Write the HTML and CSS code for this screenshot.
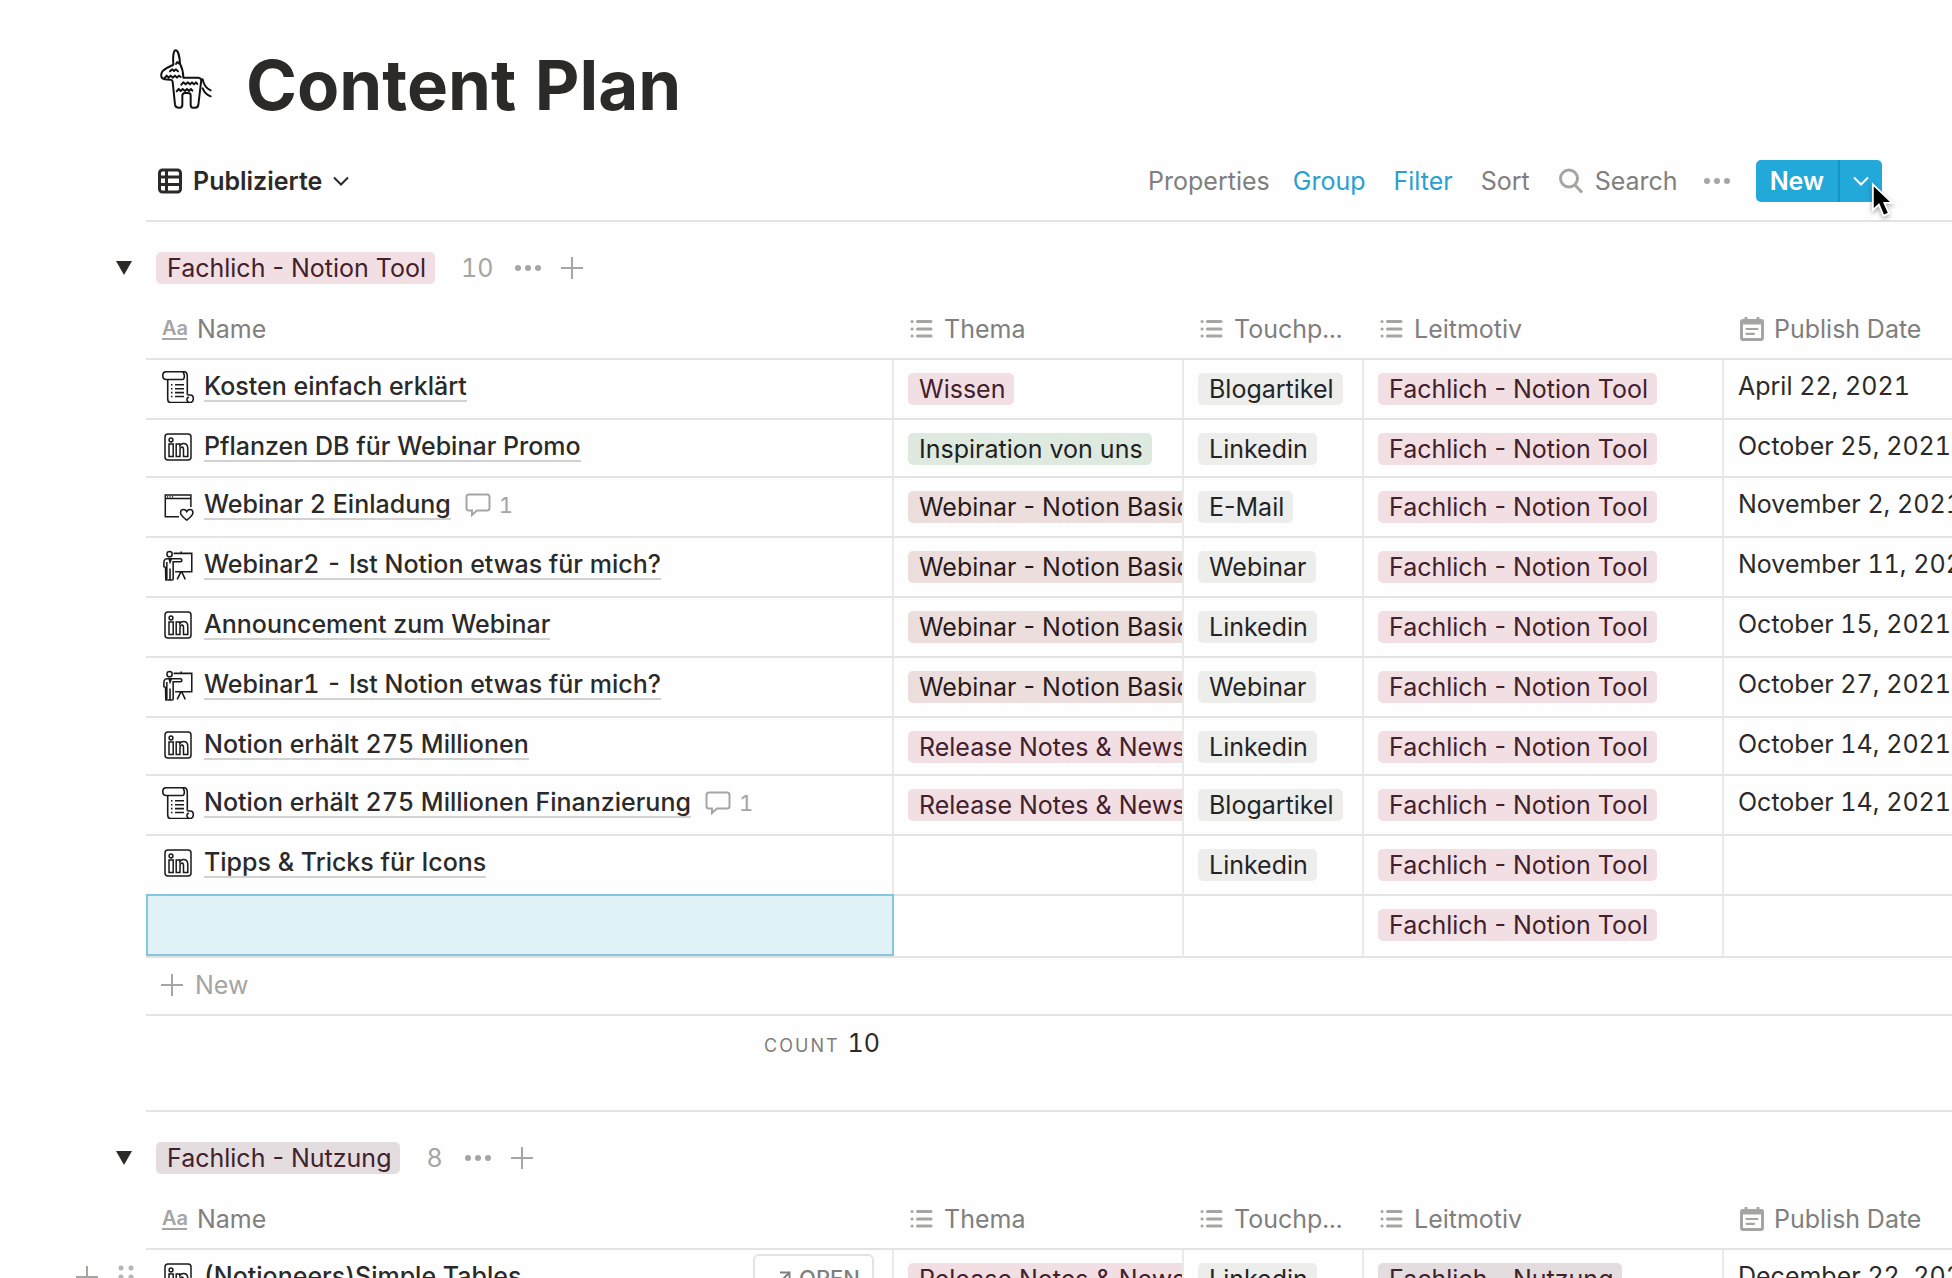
FILE: index.html
```html
<!DOCTYPE html>
<html lang="de">
<head>
<meta charset="utf-8">
<title>Content Plan</title>
<link rel="stylesheet" href="styles.css">
</head>
<body>
<svg class="sprite" aria-hidden="true">
  <symbol id="scroll" viewBox="0 0 32 32"><path stroke-width="1.600" d="M4 8.500C1.500 8.500.8 6.500.8 4.500S1.800.7 4.300.7h18C24.500.7 25.300 3 25.300 6v17.800M5.700 8.500V28c0 2.500 1 3.500 2.800 3.500h19.500M4 8.500h16.500c1.500 0 2-2 1.800-4C22 2 21 .8 20 .8M25.300 24h3.200c2 0 2.800 1.600 2.800 3.800s-1.200 3.700-3.300 3.700-3.200-1.600-3-3.500c.2-1.300 1-1.800 2-1.500M9 13.700h1.500M9 17.700h1.500M9 21.600h1.500M9 25.500h1.500M13 13.700h9M13 17.700h9M13 21.600h9M13 25.500h9"/></symbol>
  <symbol id="linkedin" viewBox="0 0 32 32"><g stroke-width="1.500"><rect x="3" y="3" width="26" height="26" rx="3"/><circle cx="9" cy="9" r="1.900"/><path d="M7 13h4.200v12.500H7zM14.200 13h3.600v1.500c1.200-1.500 2.400-1.900 3.700-1.900 3 0 4.300 2 4.300 5v7.900h-4.300v-7c0-1.700-.5-2.500-1.600-2.500s-1.900.9-1.900 2.400v7.100h-3.800z"/></g></symbol>
  <symbol id="invite" viewBox="0 0 32 34"><path stroke-width="1.600" d="M17 29.500H2.500v-23h27.200V19M2.500 10.200h27.200M4.500 8.300h1M7 8.300h1M9.500 8.300h1M25.300 33c-3.500-2.600-6.600-5-6.600-7.800 0-2 1.500-3.300 3.200-3.300 1.500 0 2.700.8 3.400 2.200.7-1.400 1.900-2.200 3.400-2.200 1.700 0 3.200 1.300 3.200 3.300 0 2.800-3.100 5.200-6.600 7.800z"/></symbol>
  <symbol id="presenter" viewBox="0 0 32 33"><g stroke-width="1.600"><circle cx="7.300" cy="5.300" r="2.700"/><path d="M11.500 4.500h18.700v19H13M19.300 4.500V2.500M19 23.500l-3.800 7.800M19.800 23.500l3.700 7.800M5.300 32H3.500l-.4-13-1.600-.8c-.5-6 .2-8.200 3.500-8.200h13.500c2 0 2 3.200 0 3.200H11V31c0 .7-.4 1-1 1H7.800V20M5.500 32h2.300M4.500 13.500V32M7 10.500l.8 3 1.200-3"/></g></symbol>
  <symbol id="comment" viewBox="0 0 26 24"><path d="M4 1.500h18c1.500 0 2.500 1 2.500 2.500v11c0 1.500-1 2.500-2.500 2.500H12l-5 4.500v-4.500H4c-1.500 0-2.500-1-2.500-2.500V4c0-1.500 1-2.500 2.500-2.500z"/></symbol>
  <symbol id="list" viewBox="0 0 24 24"><path d="M2 4.500h.1M2 12h.1M2 19h.1M7.500 4.500h13.500M7.500 12h13.500M7.500 19h13.500"/></symbol>
  <symbol id="calendar" viewBox="0 0 24 24"><path d="M2.500 3.500h19a1 1 0 0 1 1 1V21a1.500 1.500 0 0 1-1.500 1.500H3A1.500 1.500 0 0 1 1.500 21V4.500a1 1 0 0 1 1-1zM1.500 6h21M6 1v3M18 1v3"/><path stroke-width="2.200" d="M6.500 12h11M6.500 16.800h7.500"/></symbol>
  <symbol id="plus" viewBox="0 0 22 22"><path d="M11 0v22M0 11h22"/></symbol>
  <symbol id="dots" viewBox="0 0 26 8"><circle cx="3" cy="4" r="3"/><circle cx="13" cy="4" r="3"/><circle cx="23" cy="4" r="3"/></symbol>
  <symbol id="chevron" viewBox="0 0 16 10"><path d="M1 1.500l7 7 7-7"/></symbol>
</svg>

<main class="page">
  <header class="title">
    <svg class="title-icon" viewBox="30 24 162 186" aria-hidden="true"><path d="M70 74c-2-22 0-43 7-43s12 20 13 40c6 12 10 28 10 42h44c8 0 11 5 9 14l-8 68c-1 7-4 8-10 8h-6c-5 0-7-3-7-8v-29c0-5-3-7-9-7h-8c-6 0-8 3-8 8v27c0 6-3 9-8 9h-4c-6 0-9-3-10-9l-7-68c-1-6-2-7-8-7-12 0-19 0-24-5-4-5-3-16 3-22 8-7 16-11 30-17zM78 72l4-6 6 5M60 94l7-6 5 5 6-5 6 6M44 114l6-7 6 6 6-6 6 6 7-6 6 6 6-6 5 4M94 134l6-7 7 6 6-6 7 6 6-6 6 6 6-6 4 5M80 154l6-7 6 6 6-6 7 6 6-6 6 6 6-6 4 5M158 118c3 16 11 27 24 33M158 145c5 12 12 20 24 24"/></svg>
    <h1>Content Plan</h1>
  </header>

  <nav class="toolbar">
    <button class="view" type="button">
      <svg class="view-icon" viewBox="0 0 24 26" aria-hidden="true"><rect x="1.500" y="2" width="21" height="22" rx="3"/><path d="M1.500 9h21M1.500 16.500h21M8.500 2v22"/></svg>
      Publizierte
      <svg class="chev" aria-hidden="true"><use href="#chevron"/></svg>
    </button>
    <div class="actions">
      <button type="button">Properties</button>
      <button class="on" type="button">Group</button>
      <button class="on filter" type="button">Filter</button>
      <button class="sort" type="button">Sort</button>
      <button class="search" type="button"><svg viewBox="0 0 24 26" aria-hidden="true"><circle cx="10" cy="10.500" r="8.500"/><path d="M16 17l7 7.500"/></svg>Search</button>
      <button class="more" type="button" aria-label="More"><svg class="dots"><use href="#dots"/></svg></button>
      <div class="split">
        <button class="new" type="button">New</button>
        <button class="new-menu" type="button" aria-label="Templates"><svg class="chev"><use href="#chevron"/></svg></button>
        <svg class="cursor" viewBox="0 0 26 40" aria-hidden="true"><path d="M2 2v28l6.500-6 5 12 6-2.500-5-11.500H23z"/></svg>
      </div>
    </div>
  </nav>

  <section class="group">
    <div class="group-head">
      <button class="toggle" type="button" aria-label="Collapse group"></button>
      <span class="tag pink">Fachlich - Notion Tool</span>
      <span class="amount">10</span>
      <button class="more" type="button" aria-label="Options"><svg class="dots"><use href="#dots"/></svg></button>
      <button class="add" type="button" aria-label="Add"><svg class="plus"><use href="#plus"/></svg></button>
    </div>
    <table>
      <colgroup><col class="c-name"><col class="c-thema"><col class="c-touch"><col class="c-leit"><col></colgroup>
      <thead>
        <tr>
          <th><div class="th"><span class="aa">Aa</span>Name</div></th>
          <th><div class="th"><svg><use href="#list"/></svg>Thema</div></th>
          <th><div class="th"><svg><use href="#list"/></svg>Touchp...</div></th>
          <th><div class="th"><svg><use href="#list"/></svg>Leitmotiv</div></th>
          <th><div class="th"><svg><use href="#calendar"/></svg>Publish Date</div></th>
        </tr>
      </thead>
      <tbody>
        <tr><td><div class="name"><svg><use href="#scroll"/></svg><a href="#">Kosten einfach erklärt</a></div></td><td class="tags"><span class="tag pink">Wissen</span></td><td class="tags"><span class="tag gray">Blogartikel</span></td><td class="tags"><span class="tag pink">Fachlich - Notion Tool</span></td><td class="date">April 22, 2021</td></tr>
        <tr><td><div class="name"><svg><use href="#linkedin"/></svg><a href="#">Pflanzen DB für Webinar Promo</a></div></td><td class="tags"><span class="tag green">Inspiration von uns</span></td><td class="tags"><span class="tag gray">Linkedin</span></td><td class="tags"><span class="tag pink">Fachlich - Notion Tool</span></td><td class="date">October 25, 2021</td></tr>
        <tr><td><div class="name"><svg><use href="#invite"/></svg><a href="#">Webinar 2 Einladung</a><span class="comments"><svg><use href="#comment"/></svg>1</span></div></td><td class="tags"><span class="tag brown">Webinar - Notion Basics</span></td><td class="tags"><span class="tag gray">E-Mail</span></td><td class="tags"><span class="tag pink">Fachlich - Notion Tool</span></td><td class="date">November 2, 2021</td></tr>
        <tr><td><div class="name"><svg><use href="#presenter"/></svg><a href="#">Webinar2 - Ist Notion etwas für mich?</a></div></td><td class="tags"><span class="tag brown">Webinar - Notion Basics</span></td><td class="tags"><span class="tag gray">Webinar</span></td><td class="tags"><span class="tag pink">Fachlich - Notion Tool</span></td><td class="date">November 11, 2021</td></tr>
        <tr><td><div class="name"><svg><use href="#linkedin"/></svg><a href="#">Announcement zum Webinar</a></div></td><td class="tags"><span class="tag brown">Webinar - Notion Basics</span></td><td class="tags"><span class="tag gray">Linkedin</span></td><td class="tags"><span class="tag pink">Fachlich - Notion Tool</span></td><td class="date">October 15, 2021</td></tr>
        <tr><td><div class="name"><svg><use href="#presenter"/></svg><a href="#">Webinar1 - Ist Notion etwas für mich?</a></div></td><td class="tags"><span class="tag brown">Webinar - Notion Basics</span></td><td class="tags"><span class="tag gray">Webinar</span></td><td class="tags"><span class="tag pink">Fachlich - Notion Tool</span></td><td class="date">October 27, 2021</td></tr>
        <tr><td><div class="name"><svg><use href="#linkedin"/></svg><a href="#">Notion erhält 275 Millionen</a></div></td><td class="tags"><span class="tag pink">Release Notes &amp; News</span></td><td class="tags"><span class="tag gray">Linkedin</span></td><td class="tags"><span class="tag pink">Fachlich - Notion Tool</span></td><td class="date">October 14, 2021</td></tr>
        <tr><td><div class="name"><svg><use href="#scroll"/></svg><a href="#">Notion erhält 275 Millionen Finanzierung</a><span class="comments"><svg><use href="#comment"/></svg>1</span></div></td><td class="tags"><span class="tag pink">Release Notes &amp; News</span></td><td class="tags"><span class="tag gray">Blogartikel</span></td><td class="tags"><span class="tag pink">Fachlich - Notion Tool</span></td><td class="date">October 14, 2021</td></tr>
        <tr><td><div class="name"><svg><use href="#linkedin"/></svg><a href="#">Tipps &amp; Tricks für Icons</a></div></td><td></td><td class="tags"><span class="tag gray">Linkedin</span></td><td class="tags"><span class="tag pink">Fachlich - Notion Tool</span></td><td></td></tr>
        <tr class="last"><td class="selected"></td><td></td><td></td><td class="tags"><span class="tag pink">Fachlich - Notion Tool</span></td><td></td></tr>
      </tbody>
      <tfoot>
        <tr><td class="new-row" colspan="5"><button type="button"><svg class="plus"><use href="#plus"/></svg>New</button></td></tr>
        <tr><td class="count"><span>COUNT</span>10</td><td class="count" colspan="4"></td></tr>
      </tfoot>
    </table>
  </section>

  <section class="group">
    <div class="group-head">
      <button class="toggle" type="button" aria-label="Collapse group"></button>
      <span class="tag mauve">Fachlich - Nutzung</span>
      <span class="amount">8</span>
      <button class="more" type="button" aria-label="Options"><svg class="dots"><use href="#dots"/></svg></button>
      <button class="add" type="button" aria-label="Add"><svg class="plus"><use href="#plus"/></svg></button>
    </div>
    <table>
      <colgroup><col class="c-name"><col class="c-thema"><col class="c-touch"><col class="c-leit"><col></colgroup>
      <thead>
        <tr>
          <th><div class="th"><span class="aa">Aa</span>Name</div></th>
          <th><div class="th"><svg><use href="#list"/></svg>Thema</div></th>
          <th><div class="th"><svg><use href="#list"/></svg>Touchp...</div></th>
          <th><div class="th"><svg><use href="#list"/></svg>Leitmotiv</div></th>
          <th><div class="th"><svg><use href="#calendar"/></svg>Publish Date</div></th>
        </tr>
      </thead>
      <tbody>
        <tr><td class="hovered">
          <div class="handles"><svg class="plus"><use href="#plus"/></svg><svg class="grip" viewBox="0 0 16 26"><circle cx="3" cy="4" r="2.500"/><circle cx="13" cy="4" r="2.500"/><circle cx="3" cy="13" r="2.500"/><circle cx="13" cy="13" r="2.500"/><circle cx="3" cy="22" r="2.500"/><circle cx="13" cy="22" r="2.500"/></svg></div>
          <div class="name"><svg><use href="#linkedin"/></svg><a href="#">(Notioneers)Simple Tables</a></div>
          <button class="open" type="button"><svg viewBox="0 0 14 14" aria-hidden="true"><path d="M3 1.500h9.500V11M12 2L1.500 12.500"/></svg>OPEN</button>
        </td><td class="tags"><span class="tag pink">Release Notes &amp; News</span></td><td class="tags"><span class="tag gray">Linkedin</span></td><td class="tags"><span class="tag mauve">Fachlich - Nutzung</span></td><td class="date">December 22, 2021</td></tr>
      </tbody>
    </table>
  </section>
</main>
</body>
</html>
```
FILE: styles.css
```css
* { box-sizing: border-box; }
body {
  margin: 0;
  height: 100vh;
  overflow: hidden;
  background: #fefefe;
  color: #2b2a29;
  font-family: Inter, "Liberation Sans", sans-serif;
  font-size: 25px;
  font-variant-numeric: tabular-nums;
  line-height: 30px;
}
button {
  margin: 0;
  padding: 0;
  border: 0;
  background: none;
  color: inherit;
  font: inherit;
  cursor: pointer;
}
svg { flex: none; fill: none; overflow: visible; }
.sprite { position: absolute; width: 0; height: 0; }
.page { padding: 40px 0 0 146px; }

.title { display: flex; gap: 32px; padding-left: 14px; }
.title-icon { width: 54px; height: 62px; margin-top: 8px; stroke: #111; stroke-width: 6; stroke-linejoin: round; stroke-linecap: round; }
h1 { margin: 0; font-size: 69px; line-height: 90px; font-weight: 700; }

.toolbar {
  display: flex;
  justify-content: space-between;
  align-items: center;
  margin-top: 12px;
  padding: 18px 70px 18px 12px;
  border-bottom: 2px solid #e3e3e2;
}
.view { display: flex; align-items: center; gap: 11px; font-weight: 600; }
.view-icon { width: 24px; height: 26px; stroke: #2b2a29; stroke-width: 3; }
.chev { width: 16px; height: 10px; stroke: currentColor; stroke-width: 2; }
.actions { display: flex; align-items: center; gap: 23px; color: #7f7f7d; }
.on { color: #2a9fd0; }
.filter { margin: 0 5px; }
.search { display: flex; align-items: center; gap: 12px; margin: 0 3px 0 6px; }
.search svg { width: 24px; height: 26px; stroke: #a5a5a3; stroke-width: 3; }
.dots { display: block; width: 26px; height: 8px; fill: #a5a5a3; }
.split { position: relative; display: flex; height: 42px; margin-left: 3px; border-radius: 5px; background: #23a8da; color: #fff; }
.new { padding: 0 14px; border-right: 2px solid #1793c4; font-weight: 600; }
.new-menu { width: 42px; padding: 0 13px; }
.new-menu .chev { display: block; }
.cursor { position: absolute; left: 115px; top: 22px; width: 24px; height: 38px; fill: #000; stroke: #fff; stroke-width: 2; filter: drop-shadow(0 2px 2px #0005); }

.group { margin-top: 30px; }
.group-head { display: flex; align-items: center; margin: 0 0 16px -30px; }
.toggle { width: 16px; height: 14px; margin-right: 24px; background: #2b2a29; clip-path: polygon(0 0, 100% 0, 50% 100%); }
.amount { margin: 0 22px 0 26px; color: #a5a5a3; }
.plus { display: block; width: 22px; height: 22px; stroke: #a5a5a3; stroke-width: 2; }
.add { margin-left: 20px; }

.tag { display: inline-block; padding: 0 9px 0 11px; border-radius: 5px; font-variant-numeric: normal; line-height: 32px; white-space: nowrap; vertical-align: top; }
.pink { background: #f2dfe3; color: #42202c; }
.mauve { background: #e3dde0; color: #42202c; }
.green { background: #deeae0; color: #1f211f; }
.brown { background: #ebdedc; color: #2a1a1c; }
.gray { background: #ededec; color: #242424; }

table { width: 100%; table-layout: fixed; border-collapse: separate; border-spacing: 0; }
.c-name { width: 748px; }
.c-thema { width: 290px; }
.c-touch { width: 180px; }
.c-leit { width: 360px; }
th { height: 60px; padding: 14px 0 14px 16px; border-bottom: 2px solid #e3e3e2; font-weight: 400; text-align: left; white-space: nowrap; overflow: hidden; }
.th { display: flex; align-items: center; gap: 10px; color: #7f7f7d; }
.th svg { width: 24px; height: 24px; stroke: #a5a5a3; stroke-width: 3; stroke-linecap: round; }
.aa { width: 25px; border-bottom: 2px solid #a5a5a3; color: #a5a5a3; font-size: 20px; line-height: 20px; font-weight: 600; }
td { height: 60px; padding: 0; border-right: 2px solid #e9e9e8; border-bottom: 2px solid #e3e3e2; vertical-align: top; white-space: nowrap; }
td:last-child { border-right: 0; }
tbody tr:nth-child(5n+2) td { height: 58px; }
tbody .last td { height: 62px; }
.tags { padding: 13px 0 0 14px; overflow: hidden; }
.date { padding: 11px 0 0 14px; overflow: hidden; }
.name { display: flex; padding: 11px 0 0 16px; }
.name > svg { width: 32px; height: 32px; stroke: #1a1a1a; stroke-width: 2; }
.name a { height: 31px; margin-left: 10px; border-bottom: 2px solid #d2d2d1; color: inherit; font-weight: 500; text-decoration: none; }
.comments { display: flex; align-items: center; gap: 8px; margin-left: 14px; color: #a5a5a3; font-size: 22px; }
.comments svg { width: 26px; height: 24px; stroke: #a5a5a3; stroke-width: 2; }
.selected { position: relative; }
.selected::after { content: ""; position: absolute; inset: -2px -2px 0 0; border: 2px solid #84c6e0; background: #e1f2f7; }

.new-row { height: 58px; }
.new-row button { display: flex; align-items: center; gap: 12px; width: 100%; height: 54px; padding-left: 15px; color: #a5a5a3; }
.count { height: 96px; padding: 12px 14px 0 0; border-right: 0; text-align: right; }
.count span { margin-right: 8px; color: #7f7f7d; font-size: 18px; letter-spacing: 2px; }

.hovered { position: relative; }
.handles { position: absolute; left: -70px; top: 14px; display: flex; align-items: center; gap: 20px; }
.grip { width: 16px; height: 26px; fill: #b5b5b3; }
.open {
  position: absolute;
  right: 18px;
  top: 4px;
  display: flex;
  align-items: center;
  gap: 8px;
  height: 48px;
  padding: 0 12px 0 22px;
  border: 2px solid #e3e3e2;
  border-radius: 6px;
  background: #fff;
  color: #7f7f7d;
  font-size: 22px;
  font-weight: 500;
}
.open svg { width: 14px; height: 14px; stroke: #7f7f7d; stroke-width: 2; }
```
